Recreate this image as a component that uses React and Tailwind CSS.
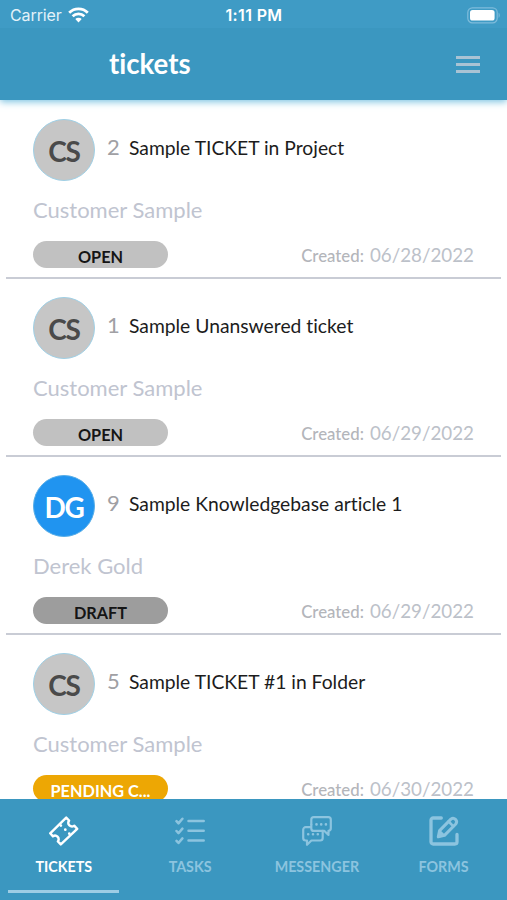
import React from "react";

const TICKETS = [
  { id: 2, initials: "CS", title: "Sample TICKET in Project", who: "Customer Sample", status: "OPEN", date: "06/28/2022" },
  { id: 1, initials: "CS", title: "Sample Unanswered ticket", who: "Customer Sample", status: "OPEN", date: "06/29/2022" },
  { id: 9, initials: "DG", title: "Sample Knowledgebase article 1", who: "Derek Gold", status: "DRAFT", date: "06/29/2022" },
  { id: 5, initials: "CS", title: "Sample TICKET #1 in Folder", who: "Customer Sample", status: "PENDING C...", date: "06/30/2022" },
];

const STATUS_STYLE = {
  OPEN: "bg-[#c1c1c1] text-[#151515]",
  DRAFT: "bg-[#9d9d9d] text-[#151515]",
  "PENDING C...": "bg-[#eda704] text-white",
};

const AVATAR_STYLE = {
  CS: "bg-[#c6c6c6] text-[#4a4a4a] border-[#9fd0e6]",
  DG: "bg-[#2094f0] text-white border-[#58aee8]",
};

function WifiIcon() {
  return (
    <svg width="21" height="16" viewBox="0 0 21 16" fill="none" stroke="#fff" strokeWidth="2.8">
      <path d="M1.2 5.8a13.2 13.2 0 0 1 18.6 0" />
      <path d="M4.6 9.3a8.4 8.4 0 0 1 11.8 0" />
      <path d="M10.5 15.4 7.3 12.1a4.6 4.6 0 0 1 6.4 0z" fill="#fff" stroke="none" />
    </svg>
  );
}

function BatteryIcon() {
  return (
    <svg width="34" height="17" viewBox="0 0 34 17">
      <rect x="0.8" y="0.8" width="29.4" height="15" rx="4.6" fill="none" stroke="#7fbcdb" strokeWidth="1.2" />
      <rect x="3" y="3" width="24.6" height="10.6" rx="2.6" fill="#fff" />
      <path d="M31.6 5.8c1.5.6 1.5 4.4 0 5z" fill="#7fbcdb" />
    </svg>
  );
}

function TicketIcon() {
  return (
    <svg width="30" height="30" viewBox="0 0 30 30" fill="none" stroke="currentColor" strokeWidth="2.4" strokeLinejoin="round" strokeLinecap="round">
      <path d="M17.2 1.6 20.1 4.5C18.9 6.4 19.2 8.2 20.4 9.3C21.7 10.5 23.4 10.8 25.2 9.7L28.2 12.8L11.8 28.4L8.9 25.4C10.1 23.6 9.7 21.9 8.5 20.7C7.3 19.5 5.6 19.2 4 20.4L1.2 17.3Z" />
      <path d="M11.9 9.5v.1M16.3 13.6v.1M20.3 17.6v.1" strokeWidth="2.7" />
    </svg>
  );
}

function TasksIcon() {
  return (
    <svg width="30" height="30" viewBox="0 0 30 30" fill="none" stroke="currentColor" strokeWidth="2.5" strokeLinecap="round" strokeLinejoin="round">
      <path d="M1.5 5.2 3.5 7.4 7.4 2.8M1.5 15 3.5 17.2 7.4 12.6M1.5 24.8 3.5 27 7.4 22.4" />
      <path d="M13.5 5h15.2M13.5 14.8h15.2M13.5 24.6h15.2" />
    </svg>
  );
}

function MessengerIcon() {
  return (
    <svg width="30" height="30" viewBox="0 0 30 30" fill="none" stroke="currentColor" strokeWidth="2.2" strokeLinejoin="round" strokeLinecap="round">
      <path d="M9.3 8.5V3.7A2.5 2.5 0 0 1 11.8 1.2H26.3A2.5 2.5 0 0 1 28.8 3.7V12.3A2.5 2.5 0 0 1 26.5 14.8V19L22.2 14.8H20.8" />
      <path d="M8.4 11.2H3.7A2.5 2.5 0 0 0 1.2 13.7V22A2.5 2.5 0 0 0 3.7 24.5H5V28.8L9.4 24.5H18.2A2.5 2.5 0 0 0 20.7 22V14.9H11.8A2.5 2.5 0 0 1 9.3 12.4V8.5" />
      <path d="M14.5 8.3v.1M19.2 8.3v.1M23.9 8.3v.1M6.2 18.2v.1M11 18.2v.1M15.8 18.2v.1" strokeWidth="2.6" />
    </svg>
  );
}

function FormsIcon() {
  return (
    <svg width="30" height="30" viewBox="0 0 30 30" fill="none" stroke="currentColor" strokeWidth="3.3" strokeLinecap="round" strokeLinejoin="round">
      <path d="M12.3 2H4.2A2.2 2.2 0 0 0 2 4.2V25.8A2.2 2.2 0 0 0 4.2 28H25.8A2.2 2.2 0 0 0 28 25.8V18.5" />
      <path d="M9.3 20.8 10.6 14.6 21.9 3.1A3.5 3.5 0 0 1 26.8 8L15.5 19.4Z" strokeWidth="3" />
      <path d="M9.3 20.8 10.6 14.6 15.5 19.4Z" fill="currentColor" strokeWidth="1.5" />
      <path d="M19.6 5.5 24.4 10.3" strokeWidth="2.6" />
    </svg>
  );
}

const TABS = [
  { label: "TICKETS", Icon: TicketIcon, active: true },
  { label: "TASKS", Icon: TasksIcon },
  { label: "MESSENGER", Icon: MessengerIcon },
  { label: "FORMS", Icon: FormsIcon },
];

function TicketRow({ t }) {
  return (
    <li className="mx-1.5 flex h-[178px] shrink-0 flex-col border-b-2 border-[#c9ccd5] pr-[27px] pl-[27px] pt-[18px]">
      <div className="flex h-[62px] items-center">
        <div className={`flex size-[62px] shrink-0 items-center justify-center rounded-full border pt-px text-[28px] font-bold tracking-[-1.2px] ${AVATAR_STYLE[t.initials]}`}>
          {t.initials}
        </div>
        <span className="ml-3 w-[22px] pb-[7px] text-[22px] text-[#a0a0a4]">{t.id}</span>
        <span className="pb-1 text-[19.3px] whitespace-nowrap text-[#1c1c1c]">{t.title}</span>
      </div>
      <div className="mt-[15px] h-[28px] text-[22px] leading-[28px] text-[#c0c4d0]">{t.who}</div>
      <div className="mt-[17px] flex h-[27px] items-center justify-between">
        <div className={`h-[27px] w-[135px] rounded-full pt-[3px] text-center text-[16.3px] leading-[26px] font-bold ${STATUS_STYLE[t.status]}`}>
          {t.status}
        </div>
        <div className="flex items-baseline gap-1.5 pt-0.5 whitespace-nowrap">
          <span className="text-[16.8px] font-medium text-[#b3b5ba]">Created:</span>
          <span className="text-[18.8px] text-[#bcc1c9]">{t.date}</span>
        </div>
      </div>
    </li>
  );
}

export default function App() {
  return (
    <div className="flex h-[900px] w-[507px] flex-col overflow-hidden bg-white font-['Lato',sans-serif] [font-variant-ligatures:none]">
      <header className="z-10 flex h-[100px] shrink-0 flex-col bg-[#3b97c0] shadow-[0_2px_7px_#7fc4e2]">
        <div className="grid h-7 grid-cols-3 items-center bg-[#3f9bc5] pr-1.5 pl-2.5 pt-0.5 font-['Inter',sans-serif] text-[16px] text-white">
          <div className="flex items-center gap-1.5 text-[#e3f2f9]">
            <span className="tracking-[-0.1px]">Carrier</span>
            <WifiIcon />
          </div>
          <span className="-ml-[3px] text-center font-semibold tracking-[0.35px]">1:11 PM</span>
          <div className="flex justify-end"><BatteryIcon /></div>
        </div>
        <div className="flex h-[72px] items-center justify-between pr-[27px] pl-[109px]">
          <h1 className="text-[27.6px] font-bold text-white">tickets</h1>
          <div className="flex w-6 flex-col gap-1">
            <i className="h-[3px] bg-[#a9c3d4]" />
            <i className="h-[3px] bg-[#a9c3d4]" />
            <i className="h-[3px] bg-[#a9c3d4]" />
          </div>
        </div>
      </header>
      <ul className="flex h-[699px] shrink-0 flex-col overflow-hidden pt-px">
        {TICKETS.map((t) => <TicketRow key={t.id} t={t} />)}
      </ul>
      <nav className="grid h-[101px] shrink-0 grid-cols-4 bg-[#3b97c0]">
        {TABS.map(({ label, Icon, active }) => (
          <div key={label} className={`flex flex-col items-center pt-[17px] ${active ? "pl-px text-white" : "text-[#8cc4df]"}`}>
            <Icon />
            <span className="mt-[11px] text-[14.3px] leading-5 font-bold">{label}</span>
            {active && <span className="mt-[13px] h-[3px] w-[111px] bg-[#9dcde5]" />}
          </div>
        ))}
      </nav>
    </div>
  );
}
